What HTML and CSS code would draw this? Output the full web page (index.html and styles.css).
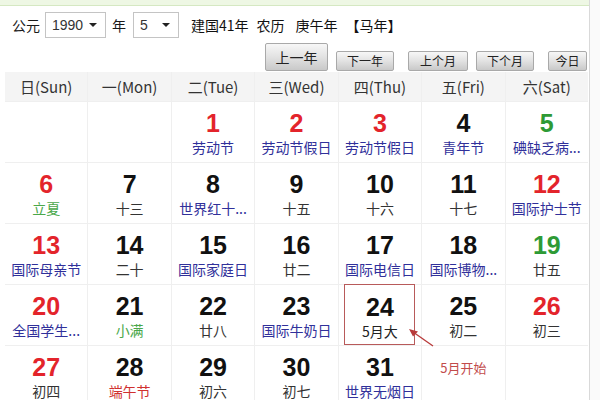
FILE: index.html
```html
<!DOCTYPE html>
<html lang="zh">
<head>
<meta charset="utf-8">
<link rel="stylesheet" href="styles.css">
</head>
<body>
<div class="page">
  <div class="band"></div>
  <div class="bar1">
    <span class="lbl">公元</span>
    <div class="sel sel-year"><span>1990</span><i class="tri"></i></div>
    <span class="lbl">年</span>
    <div class="sel sel-month"><span>5</span><i class="tri"></i></div>
    <span class="info">建国41年</span>
    <span class="info i2">农历</span>
    <span class="info i3">庚午年</span>
    <span class="info i4">【马年】</span>
  </div>
  <div class="bar2">
    <button class="btn btn-big">上一年</button>
    <button class="btn w58">下一年</button>
    <button class="btn w60 ml">上个月</button>
    <button class="btn w58">下个月</button>
    <button class="btn w39 ml">今日</button>
  </div>
  <div class="cal">
    <div class="hd">日(Sun)</div><div class="hd">一(Mon)</div><div class="hd">二(Tue)</div><div class="hd">三(Wed)</div><div class="hd">四(Thu)</div><div class="hd">五(Fri)</div><div class="hd">六(Sat)</div>

    <div class="c"></div>
    <div class="c"></div>
    <div class="c"><b class="n red">1</b><span class="t hol">劳动节</span></div>
    <div class="c"><b class="n red">2</b><span class="t hol">劳动节假日</span></div>
    <div class="c"><b class="n red">3</b><span class="t hol">劳动节假日</span></div>
    <div class="c"><b class="n">4</b><span class="t hol">青年节</span></div>
    <div class="c"><b class="n grn">5</b><span class="t hol">碘缺乏病...</span></div>

    <div class="c"><b class="n red">6</b><span class="t term">立夏</span></div>
    <div class="c"><b class="n">7</b><span class="t">十三</span></div>
    <div class="c"><b class="n">8</b><span class="t hol">世界红十...</span></div>
    <div class="c"><b class="n">9</b><span class="t">十五</span></div>
    <div class="c"><b class="n">10</b><span class="t">十六</span></div>
    <div class="c"><b class="n">11</b><span class="t">十七</span></div>
    <div class="c"><b class="n red">12</b><span class="t hol">国际护士节</span></div>

    <div class="c"><b class="n red">13</b><span class="t hol">国际母亲节</span></div>
    <div class="c"><b class="n">14</b><span class="t">二十</span></div>
    <div class="c"><b class="n">15</b><span class="t hol">国际家庭日</span></div>
    <div class="c"><b class="n">16</b><span class="t">廿二</span></div>
    <div class="c"><b class="n">17</b><span class="t hol">国际电信日</span></div>
    <div class="c"><b class="n">18</b><span class="t hol">国际博物...</span></div>
    <div class="c"><b class="n grn">19</b><span class="t">廿五</span></div>

    <div class="c"><b class="n red">20</b><span class="t hol">全国学生...</span></div>
    <div class="c"><b class="n">21</b><span class="t term">小满</span></div>
    <div class="c"><b class="n">22</b><span class="t">廿八</span></div>
    <div class="c"><b class="n">23</b><span class="t hol">国际牛奶日</span></div>
    <div class="c today"><div class="box"><b class="n">24</b><span class="t dark">5月大</span></div>
      <svg class="arrow" width="30" height="24" viewBox="0 0 30 24"><line x1="26" y1="20" x2="6" y2="6" stroke="#b83a3a" stroke-width="1.3"/><path d="M2 3 L11 5.5 L6 10.5 Z" fill="#b83a3a"/></svg>
    </div>
    <div class="c"><b class="n">25</b><span class="t">初二</span></div>
    <div class="c"><b class="n red">26</b><span class="t">初三</span></div>

    <div class="c"><b class="n red">27</b><span class="t">初四</span></div>
    <div class="c"><b class="n">28</b><span class="t fest">端午节</span></div>
    <div class="c"><b class="n">29</b><span class="t">初六</span></div>
    <div class="c"><b class="n">30</b><span class="t">初七</span></div>
    <div class="c"><b class="n">31</b><span class="t hol">世界无烟日</span></div>
    <div class="c"><span class="note">5月开始</span></div>
    <div class="c"></div>
  </div>
</div>
</body>
</html>
```

FILE: styles.css
```css
html, body {
  margin: 0;
  padding: 0;
  background: #fafafa;
  overflow: hidden;
}
.page {
  width: 589px;
  height: 400px;
  background: #fff;
  border-right: 1px solid #d9d9d9;
  font-family: "Noto Sans CJK SC", "Liberation Sans", sans-serif;
  color: #222;
}
.band {
  height: 5px;
  background: #eef7e4;
  border-bottom: 1px solid #d5e8c2;
}
.bar1 {
  display: flex;
  align-items: center;
  height: 26px;
  margin-top: 6px;
  padding-left: 12px;
  font-size: 14px;
}
.lbl { color: #1a1a1a; }
.sel {
  display: flex;
  align-items: center;
  justify-content: space-between;
  box-sizing: border-box;
  height: 26px;
  border: 1px solid #c4c4c4;
  background: #fff;
  margin: 0 6px 0 5px;
  padding: 0 8px 0 6px;
  font-family: "Liberation Sans", sans-serif;
  font-size: 14px;
  color: #333;
}
.sel-year { width: 61px; }
.sel-month { width: 46px; margin-left: 7px; }
.tri {
  width: 0; height: 0;
  border-left: 4px solid transparent;
  border-right: 4px solid transparent;
  border-top: 4px solid #222;
}
.info { margin-left: 6px; font-size: 14px; color: #111; }
.info.i2 { margin-left: 8px; }
.info.i3 { margin-left: 11px; }
.info.i4 { margin-left: 8px; }
.bar2 {
  display: flex;
  align-items: flex-end;
  height: 29px;
  margin-top: 5px;
  padding-left: 265px;
}
.btn {
  box-sizing: border-box;
  height: 20px;
  padding: 0;
  margin: 0 0 1px 8px;
  border: 1px solid #a9a9a9;
  border-radius: 2px;
  background: linear-gradient(#f7f7f7, #e2e2e2 50%, #c9c9c9);
  font-family: "Noto Sans CJK SC", sans-serif;
  font-size: 12px;
  line-height: 18px;
  color: #222;
}
.btn-big {
  width: 63px;
  height: 28px;
  margin-left: 0;
  font-size: 14px;
}
.w58 { width: 58px; }
.w60 { width: 60px; }
.w39 { width: 39px; }
.ml { margin-left: 14px; }
.cal {
  display: grid;
  grid-template-columns: repeat(7, 1fr);
  grid-template-rows: 29px repeat(5, 60px);
  gap: 1px;
  width: 583px;
  margin-left: 5px;
  background: #efefef;
}
.hd {
  background: #f4f4f4;
  font-size: 15px;
  color: #333;
  display: flex;
  align-items: center;
  justify-content: center;
}
.c {
  background: #fff;
  display: flex;
  flex-direction: column;
  align-items: center;
  position: relative;
}
.n {
  font-family: "Liberation Sans", sans-serif;
  font-weight: bold;
  font-size: 25px;
  line-height: 28px;
  margin-top: 7px;
  color: #111;
}
.n.red { color: #e3242b; }
.n.grn { color: #2e9a35; }
.t {
  font-size: 14px;
  line-height: 18px;
  margin-top: 1px;
  color: #333;
  white-space: nowrap;
}
.t.hol { color: #30309a; }
.t.term { color: #4aa84a; }
.t.fest { color: #d0302f; }
.t.dark { color: #222; }
.today { z-index: 1; }
.box {
  box-sizing: border-box;
  width: 71px;
  height: 65px;
  margin-top: -1px;
  border: 1px solid #b85a5a;
  display: flex;
  flex-direction: column;
  align-items: center;
}
.box .n { margin-top: 8px; }
.arrow {
  position: absolute;
  left: 68px;
  top: 41px;
}
.note {
  margin-top: 12px;
  font-size: 13px;
  color: #c24b4b;
}
```
